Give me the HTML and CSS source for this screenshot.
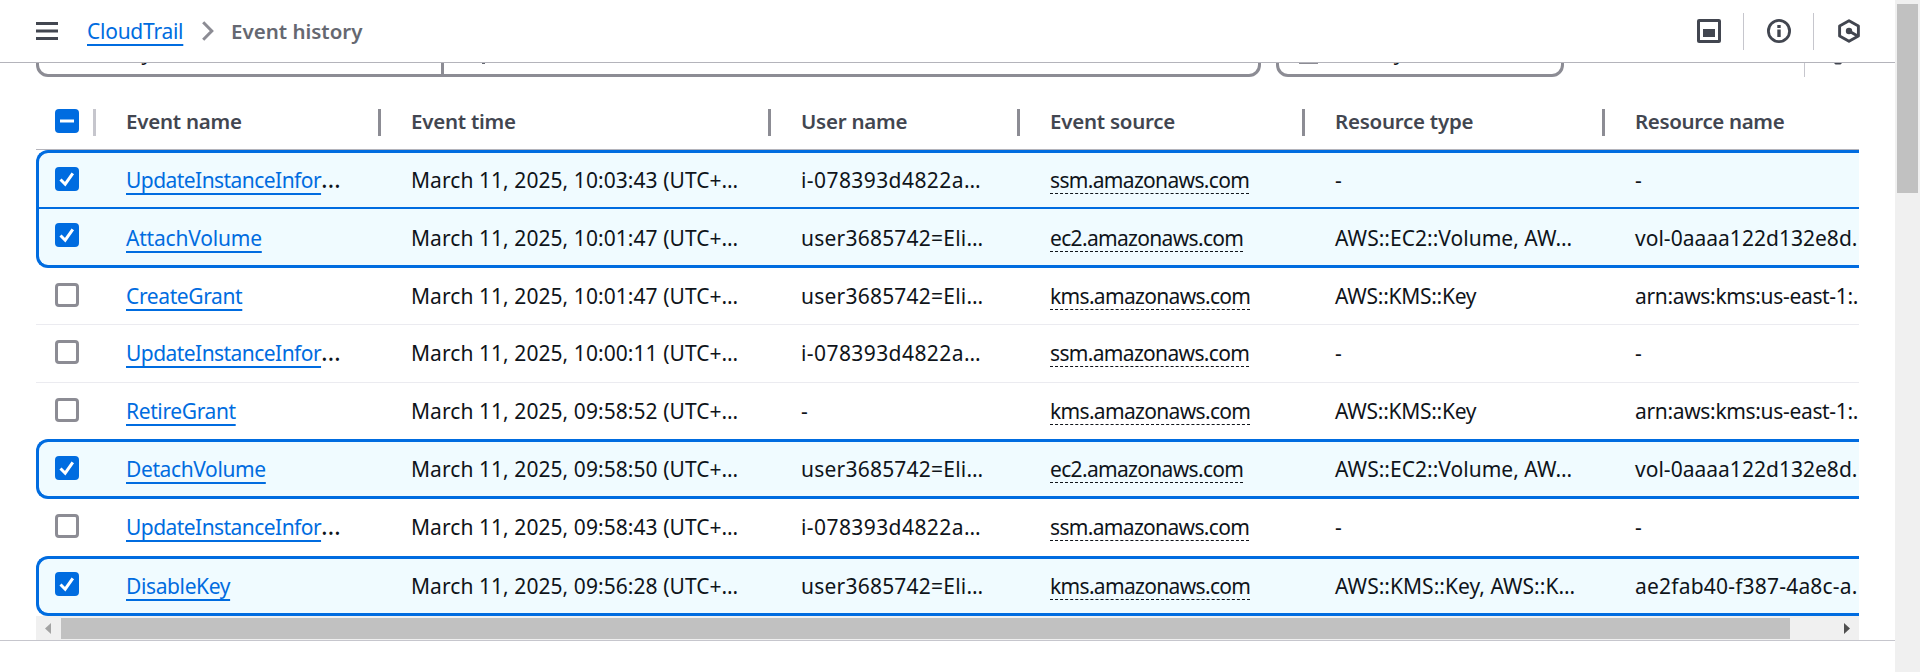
FILE: index.html
```html
<!DOCTYPE html>
<html lang="en">
<head>
<meta charset="utf-8">
<title>Event history</title>
<link rel="stylesheet" href="styles.css">
</head>
<body>
<div class="app">
  <div class="page">
    <header class="topbar">
      <svg class="menu" width="22" height="18" viewBox="0 0 22 18"><path d="M0 1.5h22M0 9h22M0 16.5h22" stroke="#424650" stroke-width="3"/></svg>
      <a class="crumb">CloudTrail</a>
      <svg class="chevron" width="12" height="20" viewBox="0 0 12 20"><path d="M1.2 1.2 9.8 10l-8.6 8.8" fill="none" stroke="#8c8c94" stroke-width="3"/></svg>
      <span class="current">Event history</span>
      <div class="tools">
        <svg width="24" height="24" viewBox="0 0 24 24"><rect x="1.5" y="1.5" width="21" height="21" rx=".6" fill="none" stroke="#424650" stroke-width="3"/><path d="M6 10h12v8H6z" fill="#424650"/></svg>
        <i></i>
        <svg width="24" height="24" viewBox="0 0 24 24"><circle cx="12" cy="12" r="10.6" fill="none" stroke="#424650" stroke-width="2.8"/><path d="M10.3 6h3.4v3h-3.4zM10.3 10.5h3.4V18h-3.4z" fill="#424650"/></svg>
        <i></i>
        <svg width="24" height="24" viewBox="0 0 24 24"><path d="M12 1.8 21.4 7v10L12 22.2 2.6 17V7z" fill="none" stroke="#424650" stroke-width="2.9" stroke-linejoin="round"/><circle cx="12" cy="12" r="3.2" fill="#424650"/><path d="m12 12 9 5.2" stroke="#424650" stroke-width="3"/></svg>
      </div>
    </header>

    <div class="filters">
      <div class="lookup">
        <div class="attribute"><span>Read-only</span></div>
        <div class="value"><b></b></div>
      </div>
      <div class="dates"><svg width="19" height="20" viewBox="0 0 19 20"><rect x="1.5" y="1.5" width="16" height="17" fill="none" stroke="#8c8c94" stroke-width="3"/></svg><span>Filter by</span></div>
      <div class="prefs"><svg width="24" height="24" viewBox="0 0 24 24"><circle cx="12" cy="12" r="8" fill="none" stroke="#424650" stroke-width="3"/><path d="M8 19h8v3l-1.5 1.5h-5L8 22z" fill="#424650"/></svg></div>
    </div>

    <main class="table" id="table">
      <div class="row head">
        <div class="pick"><span class="box some"><svg width="24" height="24"><path d="M5 12h14" stroke="#fff" stroke-width="3"/></svg></span></div>
        <div class="cell">Event name</div>
        <div class="cell">Event time</div>
        <div class="cell">User name</div>
        <div class="cell">Event source</div>
        <div class="cell">Resource type</div>
        <div class="cell">Resource name</div>
      </div>
    </main>
    <div class="hscroll">
      <svg width="25" height="24" viewBox="0 0 25 24"><path d="M15 7v11l-6-5.5z" fill="#a3a3a3"/></svg>
      <div class="hthumb"></div>
      <svg class="next" width="25" height="24" viewBox="0 0 25 24"><path d="M10 7v11l6-5.5z" fill="#505050"/></svg>
    </div>
    <div class="rule"></div>
  </div>
  <div class="vscroll"><div class="vthumb"></div></div>
</div>
<script src="table.js"></script>
</body>
</html>
```
FILE: styles.css
```css
* { box-sizing: border-box; }
body {
  margin: 0;
  background: #fff;
  color: #0f141a;
  font: 21px/30px "Noto Sans", "Open Sans", sans-serif;
  overflow: hidden;
}
svg { display: block; flex: none; }
.app { display: flex; width: 1920px; height: 672px; }
.page { width: 1895px; overflow: hidden; }

.topbar {
  display: flex;
  align-items: center;
  height: 63px;
  padding: 0 34px 0 36px;
  border-bottom: 1px solid #b4b4bb;
}
.menu { margin-right: 29px; }
.crumb, .link {
  color: #006ce0;
  text-decoration: underline 2px;
  text-underline-offset: 5px;
  text-decoration-skip-ink: none;
}
.crumb, .current { padding-bottom: 1px; }
.crumb { width: 97px; letter-spacing: -.25px; margin-right: 18px; white-space: nowrap; }
.chevron { margin-right: 17px; }
.current { color: #656871; font-size: 20.5px; font-weight: 600; letter-spacing: 0; }
.tools { display: flex; align-items: center; margin-left: auto; }
.tools i { width: 1px; height: 37px; background: #c6c6cd; margin: 0 23px 0 22px; }

.filters {
  display: flex;
  align-items: flex-end;
  height: 14px;
  margin: 0 36px;
  overflow: hidden;
}
.lookup, .dates {
  display: flex;
  flex: none;
  height: 48px;
  border: 3px solid #8c8c94;
  border-radius: 12px;
}
.lookup { width: 1225px; margin-right: 15px; }
.attribute { width: 402px; padding: 5px 15px; }
.value { flex: 1; border-left: 3px solid #8c8c94; padding: 31px 0 0 38px; }
.value b { display: block; width: 3px; height: 1px; background: #656871; }
.dates { width: 288px; padding: 5px 0 0 20px; gap: 8px; }
.dates svg { margin-top: 7px; }
.prefs {
  width: 55px;
  height: 48px;
  margin-left: auto;
  border-left: 1px solid #c6c6cd;
  padding: 12px 0 0 21px;
}

.table { margin: 0 36px; overflow: hidden; }
.row {
  display: grid;
  grid-template-columns: var(--first, 60px) 285px 390px 249px 285px 300px 254px;
  height: var(--h);
}
.cell {
  padding: var(--text) 0 0 30px;
  white-space: nowrap;
  overflow: hidden;
}
.pick { padding: var(--check) 0 0 var(--left, 19px); }
.box {
  display: block;
  width: 24px;
  height: 24px;
  border: 3px solid #8c8c94;
  border-radius: 4px;
}
.box.on, .box.some { border: 0; background: #006ce0; }
.head {
  --h: 73px;
  --text: 29px;
  --check: 32px;
  border-bottom: 1px solid #b4b4bb;
  color: #424650;
  font-size: 20.5px;
  font-weight: 600;
  letter-spacing: -.25px;
}
.head .cell, .head .pick {
  background: linear-gradient(#8c8c94, #8c8c94) right 32px / 3px 27px no-repeat;
}
.head .pick { background-image: linear-gradient(#c6c6cd, #c6c6cd); }
.head .cell:last-child { background: none; letter-spacing: -.35px; }

.plain { --h: 57px; --text: 13px; --check: 15px; }
.lined { border-bottom: 1px solid #ebebf0; }
.tall { --h: 58px; }
.selected {
  --h: 60px;
  --text: 12px;
  --check: 14px;
  --first: 57px;
  --left: 16px;
  background: #f0fbff;
  border: 3px solid #006ce0;
  border-right: 0;
  border-radius: 12px 0 0 12px;
}
.opening { --h: 59px; border-bottom-width: 2px; border-radius: 12px 0 0 0; }
.closing { --h: 59px; --text: 14px; --check: 14px; border-top: 0; border-radius: 0 0 0 12px; }
.last { --check: 13px; }
.short { --h: 56px; }

.update { letter-spacing: -.55px; }
.more { letter-spacing: 0; font-size: 25px; line-height: 1px; }
.name { letter-spacing: -.38px; }
.closing .name { letter-spacing: -.2px; }
.time { letter-spacing: .06px; }
.instance { letter-spacing: .42px; }
.user { letter-spacing: .22px; }
.resource { letter-spacing: .02px; }
.key { letter-spacing: -.28px; }
.arn { letter-spacing: -.33px; }
.hash { letter-spacing: .2px; }
.source {
  display: inline-block;
  height: 29px;
  vertical-align: top;
  border-bottom: 1px dashed #0f141a;
  letter-spacing: -.67px;
}

.hscroll {
  display: flex;
  height: 24px;
  margin: 0 36px;
  background: #f0f0f0;
}
.hthumb { width: 1729px; height: 21px; margin-top: 2px; background: #c1c1c1; }
.next { margin-left: auto; }
.rule { height: 1px; background: #c6c6cd; }
.vscroll { width: 25px; padding: 4px 2px; background: #f0f0f0; }
.vthumb { height: 189px; background: #c1c1c1; }
```
FILE: table.js
```js
// Row: classes, event, time, user, source, resource type, resource name
const rows = [
  ['selected opening', 'UpdateInstanceInfor', '10:03:43', 'i', 'ssm', '-', '-'],
  ['selected closing', 'AttachVolume', '10:01:47', 'u', 'ec2', 'AWS::EC2::Volume, AW…', 'vol-0aaaa122d132e8d.'],
  ['plain lined', 'CreateGrant', '10:01:47', 'u', 'kms', 'AWS::KMS::Key', 'arn:aws:kms:us-east-1:.'],
  ['plain lined tall', 'UpdateInstanceInfor', '10:00:11', 'i', 'ssm', '-', '-'],
  ['plain short', 'RetireGrant', '09:58:52', '-', 'kms', 'AWS::KMS::Key', 'arn:aws:kms:us-east-1:.'],
  ['selected', 'DetachVolume', '09:58:50', 'u', 'ec2', 'AWS::EC2::Volume, AW…', 'vol-0aaaa122d132e8d.'],
  ['plain', 'UpdateInstanceInfor', '09:58:43', 'i', 'ssm', '-', '-'],
  ['selected last', 'DisableKey', '09:56:28', 'u', 'kms', 'AWS::KMS::Key, AWS::K…', 'ae2fab40-f387-4a8c-a.']
];
const users = {
  i: '<span class="instance">i-078393d4822a…</span>',
  u: '<span class="user">user3685742=Eli…</span>',
  '-': '-'
};
const tick = '<svg width="24" height="24"><path d="m5.5 12.5 4.7 4.7L17.8 6.3" fill="none" stroke="#fff" stroke-width="3"/></svg>';
const nameClass = text => text.startsWith('arn') ? 'arn' : text.startsWith('ae') ? 'hash' : 'resource';

document.getElementById('table').insertAdjacentHTML('beforeend', rows.map(
  ([cls, event, time, user, source, type, resource]) => {
    const on = cls.startsWith('selected');
    const cut = event.startsWith('Update');
    return `<div class="row ${cls}">
      <div class="pick"><span class="box ${on ? 'on' : ''}">${on ? tick : ''}</span></div>
      <div class="cell"><a class="link ${cut ? 'update' : 'name'}">${event}</a>${cut ? '<span class="more">…</span>' : ''}</div>
      <div class="cell time">March 11, 2025, ${time} (UTC+…</div>
      <div class="cell">${users[user]}</div>
      <div class="cell"><span class="source">${source}.amazonaws.com</span></div>
      <div class="cell ${type.endsWith('Key') ? 'key' : 'resource'}">${type}</div>
      <div class="cell ${nameClass(resource)}">${resource}</div>
    </div>`;
  }).join(''));
```
